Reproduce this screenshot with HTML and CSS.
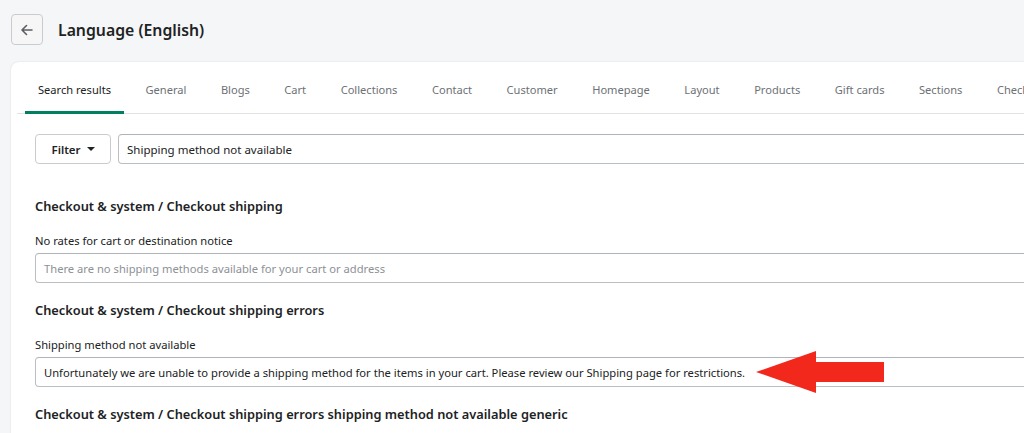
FILE: index.html
```html
<!DOCTYPE html>
<html lang="en">
  <head>
    <meta charset="UTF-8" />
    <meta name="viewport" content="width=device-width, initial-scale=1.0" />
    <title>Language (English)</title>
    <link rel="stylesheet" href="styles.css">
  </head>
  <body>
    <div class="page-header">
      <button class="back-btn" aria-label="Back">
        <svg width="16" height="16" viewBox="0 0 16 16">
          <path d="M13 8H3.5M7.5 3.5L3 8l4.5 4.5" fill="none" stroke="#5c5f62" stroke-width="1.6" stroke-linecap="round" stroke-linejoin="round" />
        </svg>
      </button>
      <h1>Language (English)</h1>
    </div>

    <div class="card">
      <ul class="tabs">
        <li class="tab active">Search results</li>
        <li class="tab">General</li>
        <li class="tab">Blogs</li>
        <li class="tab">Cart</li>
        <li class="tab">Collections</li>
        <li class="tab">Contact</li>
        <li class="tab">Customer</li>
        <li class="tab">Homepage</li>
        <li class="tab">Layout</li>
        <li class="tab">Products</li>
        <li class="tab">Gift cards</li>
        <li class="tab">Sections</li>
        <li class="tab">Checkout &amp; system</li>
      </ul>

      <div class="card-body">
        <div class="search-row">
          <button class="filter-btn">Filter <span class="caret"></span></button>
          <div class="field search-field">Shipping method not available</div>
        </div>

        <h3>Checkout &amp; system / Checkout shipping</h3>
        <div class="form-group">
          <label>No rates for cart or destination notice</label>
          <div class="field placeholder">There are no shipping methods available for your cart or address</div>
        </div>

        <h3>Checkout &amp; system / Checkout shipping errors</h3>
        <div class="form-group">
          <label>Shipping method not available</label>
          <div class="field">Unfortunately we are unable to provide a shipping method for the items in your cart. Please review our Shipping page for restrictions.</div>
        </div>

        <h3>Checkout &amp; system / Checkout shipping errors shipping method not available generic</h3>
      </div>
    </div>

    <svg class="arrow" width="140" height="50" viewBox="746 347 140 50">
      <polygon points="756,372 816,351 816,362 884,362 884,382 816,382 816,393" fill="#f3281d" />
    </svg>
  </body>
</html>
```

FILE: styles.css
```css
html,
body {
  overflow: hidden;
}
body {
  font-family: "Noto Sans", "Open Sans", sans-serif;
  font-size: 11.2px;
  color: #202223;
  background: #f5f6f7;
  margin: 0;
  padding: 14px 0 0 11px;
  position: relative;
  height: 433px;
  box-sizing: border-box;
}
.page-header {
  display: flex;
  align-items: center;
  gap: 15px;
  height: 31px;
}
.back-btn {
  width: 32px;
  height: 31px;
  padding: 0;
  border: 1px solid #c9cccf;
  border-radius: 4px;
  background: #f6f6f7;
  display: flex;
  align-items: center;
  justify-content: center;
}
h1 {
  margin: 0;
  font-size: 15.8px;
  font-weight: 600;
}
.card {
  margin-top: 17px;
  width: 1100px;
  background: #fff;
  border-radius: 8px;
  box-shadow: 0 0 2px rgba(0, 0, 0, 0.12);
  height: 400px;
}
.tabs {
  list-style: none;
  margin: 0 0 0 6px;
  padding: 0 0 0 8px;
  display: flex;
  gap: 8.5px;
  border-bottom: 1px solid #e1e3e5;
  height: 51px;
  white-space: nowrap;
  font-size: 11.1px;
}
.tab {
  padding: 6px 13px 0;
  display: flex;
  align-items: center;
  box-sizing: border-box;
  color: #6d7175;
  border-bottom: 3px solid transparent;
  margin-bottom: -1px;
}
.tab.active {
  color: #202223;
  border-bottom-color: #008060;
}
.card-body {
  padding: 20px 0 0 24px;
}
.search-row {
  display: flex;
  gap: 7px;
  margin-bottom: 33px;
}
.filter-btn {
  width: 76px;
  height: 30px;
  border: 1px solid #c9cccf;
  border-radius: 4px;
  background: #fff;
  font-family: inherit;
  font-size: 11.5px;
  font-weight: 600;
  color: #202223;
  display: flex;
  align-items: center;
  justify-content: center;
  gap: 6px;
}
.caret {
  width: 0;
  height: 0;
  border-left: 4px solid transparent;
  border-right: 4px solid transparent;
  border-top: 4px solid #202223;
}
.field {
  height: 30px;
  border: 1px solid #babfc3;
  border-top-color: #aeb4b9;
  border-radius: 4px;
  box-sizing: border-box;
  padding: 0 8px;
  display: flex;
  align-items: center;
  white-space: nowrap;
  background: #fff;
}
.search-field {
  flex: 1;
  font-size: 11.5px;
}
.placeholder {
  color: #8c9196;
}
h3 {
  margin: 18px 0 0;
  font-size: 12.8px;
  font-weight: 600;
  line-height: 18px;
}
.form-group {
  margin-top: 18px;
  display: flex;
  flex-direction: column;
  gap: 4px;
}
label {
  line-height: 16px;
}
.arrow {
  position: absolute;
  left: 746px;
  top: 347px;
}
```
